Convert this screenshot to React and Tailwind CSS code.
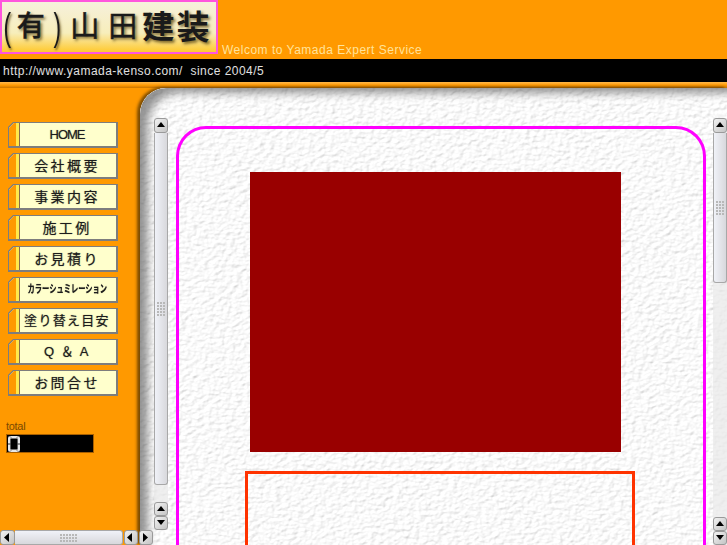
const navItems = [
  { label: "HOME", className: "text-[13px] tracking-[-1px]" },
  { label: "会社概要", className: "text-[14px] tracking-[2.4px]" },
  { label: "事業内容", className: "text-[14px] tracking-[2.4px]" },
  { label: "施工例", className: "text-[14px] tracking-[2.4px]" },
  { label: "お見積り", className: "text-[14px] tracking-[2.4px]" },
  { label: "カラーシュミレーション", className: "text-[11px] font-bold scale-x-[0.66]" },
  { label: "塗り替え目安", className: "text-[13px] tracking-[1.3px]" },
  { label: "Q ＆ A", className: "text-[13px] tracking-[1.5px]" },
  { label: "お問合せ", className: "text-[14px] tracking-[2.4px]" },
];

function Arrow({ dir }) {
  const points = {
    up: "1,6 9,6 5,1",
    down: "1,1 9,1 5,6",
    left: "6,0 6,9 1,4.5",
    right: "2,0 2,9 7,4.5",
  };
  return (
    <svg width="10" height="9" viewBox="0 0 10 9">
      <polygon points={points[dir]} fill="#000" />
    </svg>
  );
}

function ScrollButton({ dir, className = "" }) {
  return (
    <div className={`flex shrink-0 items-center justify-center rounded-[3px] border border-[#9a9a9a] bg-[linear-gradient(135deg,#f2f2f2,#c4c4c4)] ${className}`}>
      <Arrow dir={dir} />
    </div>
  );
}

function Grip({ cols, rows }) {
  return (
    <div className="grid gap-[1px]" style={{ gridTemplateColumns: `repeat(${cols}, 2px)` }}>
      {Array.from({ length: cols * rows }).map((_, i) => (
        <span key={i} className="h-[2px] w-[2px] bg-[#b8b8b8]" />
      ))}
    </div>
  );
}

function VScroll({ thumbHeight, className = "" }) {
  return (
    <div className={`flex w-[14px] shrink-0 flex-col bg-[#e8e8e8]/70 ${className}`}>
      <ScrollButton dir="up" className="h-[15px] w-[14px]" />
      <div
        className="flex shrink-0 items-center justify-center rounded-b-[3px] border border-t-0 border-[#a8a8a8] bg-[linear-gradient(90deg,#f0f2f8,#d8d8dc)]"
        style={{ height: thumbHeight }}
      >
        <Grip cols={3} rows={5} />
      </div>
      <div className="flex-1" />
      <ScrollButton dir="up" className="h-[14px] w-[14px]" />
      <ScrollButton dir="down" className="h-[14px] w-[14px]" />
    </div>
  );
}

function NavButton({ label, className }) {
  return (
    <div className="h-[26px] w-[110px] bg-[#7d7d7d] [clip-path:polygon(5px_0,100%_0,100%_100%,0_100%,0_5px)]">
      <div className="flex h-[23px] w-[107px] translate-x-[1px] translate-y-[1px] bg-[#ffffcc] [clip-path:polygon(5px_0,100%_0,100%_100%,0_100%,0_5px)]">
        <div className="w-[7px] shrink-0 bg-[#ff9900]" />
        <div className="w-[3px] shrink-0 bg-[#ffe94d]" />
        <div className="w-[1px] shrink-0 bg-[#8a6a4a]" />
        <div className="flex min-w-0 flex-1 items-center justify-center whitespace-nowrap pr-[2px] leading-none text-[#1c1c1c] [text-shadow:0_0_1px_rgba(0,0,0,0.55)]">
          <span className={`inline-block ${className}`}>{label}</span>
        </div>
      </div>
    </div>
  );
}

function Counter() {
  return (
    <div className="ml-[6px] mt-[1px] flex h-[19px] w-[88px] items-center border border-[#a85f00] bg-black pl-[1px]">
      <svg width="12" height="16" viewBox="0 0 12 16">
        <rect x="1.2" y="1.2" width="9.6" height="13.6" rx="1" fill="none" stroke="#e8e8e8" strokeWidth="2.4" />
        <path d="M0 8h2.4M9.6 8H12M2 0.5l1 1M10 0.5l-1 1M2 15.5l1-1M10 15.5l-1-1" stroke="#000" strokeWidth="0.8" />
      </svg>
    </div>
  );
}

function Logo() {
  return (
    <div className="flex h-[54px] w-[218px] items-center border-2 border-[#ff55dd] bg-[linear-gradient(180deg,#f6f0dc_0%,#f7eebb_62%,#ffc92e_100%)] text-[#1a1a1a] [text-shadow:2px_2px_3px_rgba(90,70,20,0.8)]">
      <span className="-ml-[1px] inline-block scale-x-[0.6] text-[38px] leading-none">(</span>
      <span className="ml-[3px] text-[28px] font-medium leading-none [-webkit-text-stroke:0.4px_#1a1a1a]">有</span>
      <span className="ml-[6px] inline-block scale-x-[0.6] text-[38px] leading-none">)</span>
      <span className="ml-[7px] text-[29px] leading-none [-webkit-text-stroke:0.5px_#1a1a1a]">山</span>
      <span className="ml-[9px] text-[29px] leading-none [-webkit-text-stroke:0.5px_#1a1a1a]">田</span>
      <span className="ml-[5px] text-[32px] font-bold leading-none">建</span>
      <span className="ml-[2px] text-[33px] font-bold leading-none">装</span>
    </div>
  );
}

export default function App() {
  return (
    <div className="relative flex h-[545px] w-[727px] flex-col overflow-hidden bg-[#ff9900] font-['Liberation_Sans','Noto_Sans_CJK_JP',sans-serif]">
      {/* HEADER */}
      <div className="flex h-[59px] shrink-0 items-start bg-[#ff9900]">
        <Logo />
        <span className="ml-[4px] mt-[43px] whitespace-nowrap text-[12px] leading-[14px] tracking-[0.5px] text-[#ffe39a]">
          Welcom to Yamada Expert Service
        </span>
      </div>

      {/* URL BAR */}
      <div className="flex h-[23px] shrink-0 items-center bg-black pl-[3px] text-[12px] tracking-[0.47px] text-[#e0e0e0]">
        <span className="whitespace-pre">http://www.yamada-kenso.com/  since 2004/5</span>
      </div>
      <div className="h-[6px] shrink-0 bg-[linear-gradient(180deg,#ffb84d_0%,#ff9900_55%,#c87400_100%)]" />

      {/* BODY */}
      <div className="flex min-h-0 flex-1">
        <aside className="w-[140px] shrink-0 bg-[#ff9900] pt-[34px]">
          <nav className="ml-[8px] flex flex-col gap-[5px]">
            {navItems.map((item) => (
              <NavButton key={item.label} label={item.label} className={item.className} />
            ))}
          </nav>
          <p className="ml-[6px] mt-[24px] text-[11px] leading-[13px] tracking-[-0.3px] text-[#7a4a00]">total</p>
          <Counter />
        </aside>

        <main className="relative flex min-w-0 flex-1 overflow-hidden rounded-tl-[26px] bg-[#f4f4f4] pl-[14px] pt-[30px] shadow-[-3px_-1px_3px_rgba(80,50,0,0.75)]">
          {/* wall texture */}
          <svg className="absolute inset-0 h-full w-full" aria-hidden="true">
            <filter id="wall" x="0" y="0" width="100%" height="100%">
              <feTurbulence type="fractalNoise" baseFrequency="0.18 0.28" numOctaves="2" seed="4" />
              <feDiffuseLighting surfaceScale="1.1" diffuseConstant="1.07" lightingColor="#ffffff">
                <feDistantLight azimuth="225" elevation="64" />
              </feDiffuseLighting>
            </filter>
            <rect width="100%" height="100%" filter="url(#wall)" />
          </svg>
          <div className="pointer-events-none absolute inset-0 rounded-tl-[26px] shadow-[inset_13px_10px_8px_-5px_rgba(90,90,90,0.65)]" />

          <VScroll thumbHeight={352} className="relative mb-[15px]" />

          <div className="relative ml-[8px] mr-[7px] mt-[8px] flex-1">
            <div className="h-[460px] rounded-t-[30px] border-[3px] border-b-0 border-[#ff00ff] px-[66px] pt-[43px]">
              <div className="ml-[5px] h-[280px] w-[371px] bg-[#990000]" />
              <div className="mt-[19px] h-[100px] w-[390px] border-[3px] border-b-0 border-[#ff3300]" />
            </div>
          </div>

          <VScroll thumbHeight={150} className="relative" />
        </main>
      </div>

      {/* horizontal scrollbar of the left frame */}
      <div className="absolute bottom-0 left-0 flex h-[15px] w-[153px] items-stretch">
        <ScrollButton dir="left" className="w-[15px]" />
        <div className="flex w-[108px] items-center justify-center rounded-r-[3px] border border-l-0 border-[#a8a8a8] bg-[linear-gradient(180deg,#f0f2f8,#d8d8dc)]">
          <Grip cols={6} rows={3} />
        </div>
        <ScrollButton dir="left" className="ml-[1px] w-[14px]" />
        <ScrollButton dir="right" className="ml-[1px] w-[14px]" />
      </div>
    </div>
  );
}
